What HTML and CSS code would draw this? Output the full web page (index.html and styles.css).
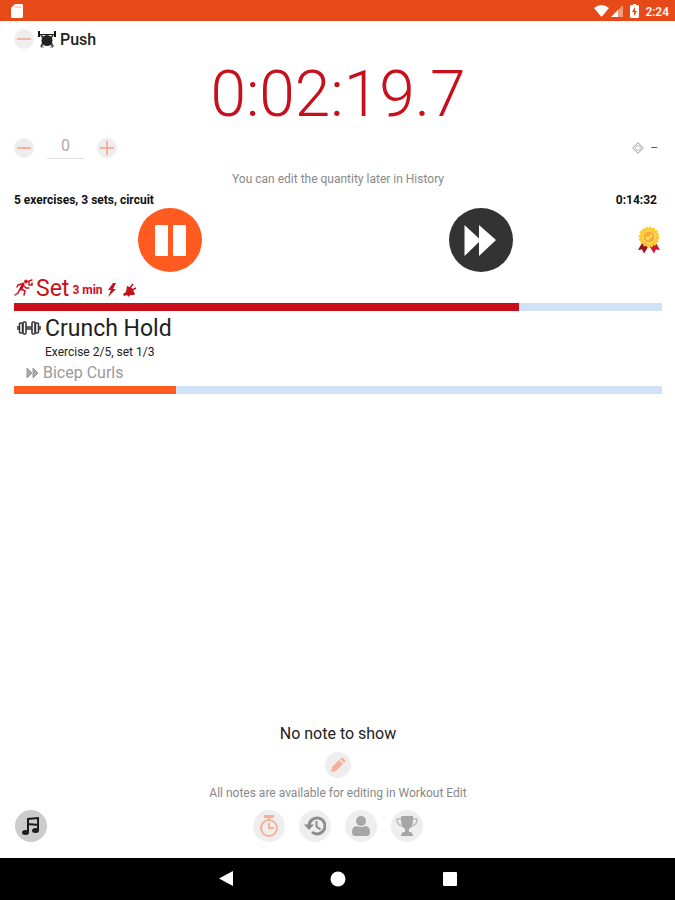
FILE: index.html
```html
<!DOCTYPE html>
<html lang="en">
<head>
    <meta charset="UTF-8">
    <meta name="viewport" content="width=device-width, initial-scale=1.0">
    <title>Push</title>
    <link rel="stylesheet" href="styles.css">
</head>
<body>
    <div class="status-bar">
        <svg class="sd-card" width="12" height="14" viewBox="0 0 12 14"><path fill="#fff" d="M4 0h7l1 1v12l-1 1H1l-1-1V4z"/><path stroke="#f3a98e" d="M5 2v2M7 2v2M9 2v2"/></svg>
        <div class="status-icons">
            <svg width="15" height="12" viewBox="0 0 15 12"><path fill="#fff" d="M0 3Q7.500-3 15 3L7.500 12z"/></svg>
            <svg width="12" height="12" viewBox="0 0 12 12"><path fill="#f29c7d" d="M0 12 12 0v12z"/><path fill="#fff" d="M0 12 7 5v7z"/></svg>
            <svg class="battery" width="9" height="14" viewBox="0 0 9 14"><path fill="#fff" d="M3 0h3v1h2l1 1v11l-1 1H1l-1-1V2l1-1h2z"/><path fill="#e64a19" d="M5 3 2 8h2v4l3-5H5z"/></svg>
            <span class="clock">2:24</span>
        </div>
    </div>

    <main class="workout">
        <header class="title-row">
            <button class="small-button" aria-label="Collapse">
                <svg width="14" height="14" viewBox="0 0 14 14"><path stroke="#f6a58c" stroke-width="1.500" d="M0 7h14"/></svg>
            </button>
            <svg width="18" height="17" viewBox="0 0 18 17"><path stroke="#222" stroke-width="1" d="M1 3.500h16"/><path stroke="#111" stroke-width="2" d="M1 0v6M17 0v6"/><path stroke="#444" stroke-width="2" fill="none" d="M3 4l3 4M15 4l-3 4M5 12l-2 4M13 12l2 4"/><circle cx="9" cy="9.500" r="5.500" fill="#222"/><path stroke="#777" d="M3 16h3M12 16h3"/></svg>
            <h1>Push</h1>
        </header>

        <div class="timer" role="timer">0:02:19.7</div>

        <div class="quantity-row">
            <div class="quantity">
                <button class="small-button" aria-label="Decrease quantity">
                    <svg width="14" height="14" viewBox="0 0 14 14"><path stroke="#fa9d80" stroke-width="1.500" d="M0 7h14"/></svg>
                </button>
                <input type="text" class="quantity-input" value="0" aria-label="Quantity">
                <button class="small-button" aria-label="Increase quantity">
                    <svg width="14" height="14" viewBox="0 0 14 14"><path stroke="#fa9d80" stroke-width="1.500" d="M0 7h14M7 0v14"/></svg>
                </button>
            </div>
            <div class="target">
                <svg width="12" height="12" viewBox="0 0 12 12" fill="none" stroke="#999"><path d="M6 .7 11.300 6 6 11.300.7 6z"/><circle cx="6" cy="6" r="2.500" stroke="#bbb"/></svg>
                <span>–</span>
            </div>
        </div>
        <p class="hint">You can edit the quantity later in History</p>

        <div class="summary">
            <span>5 exercises, 3 sets, circuit</span>
            <span>0:14:32</span>
        </div>

        <div class="controls">
            <div class="control">
                <button class="round-button pause" aria-label="Pause">
                    <svg width="64" height="64" viewBox="0 0 64 64" fill="#fff"><rect x="17" y="17" width="13" height="31" rx="1"/><rect x="35" y="17" width="13" height="31" rx="1"/></svg>
                </button>
            </div>
            <div class="control">
                <button class="round-button skip" aria-label="Skip">
                    <svg width="64" height="64" viewBox="0 0 64 64" fill="#fff"><path d="M15.500 17 30 30.500V17L47 32 30 48V34L15.500 48z"/></svg>
                </button>
            </div>
            <svg width="26" height="28" viewBox="0 0 26 28">
                <path fill="#9e1220" d="M6 17 2 24l4-.5 2 4 5-8z"/>
                <path fill="#cf1c2d" d="M20 17l4 7-4-.5-2 4-5-8z"/>
                <circle cx="13" cy="11" r="9.500" fill="#fccb34"/>
                <circle cx="13" cy="11" r="9.500" fill="none" stroke="#fccb34" stroke-width="2" stroke-dasharray="2 1.730"/>
                <circle cx="13" cy="11" r="6" fill="#fba92c" stroke="#fde27a"/>
                <path fill="none" stroke="#fde27a" stroke-width="2" d="m10 11 2 2 4-4"/>
            </svg>
        </div>

        <section class="set">
            <div class="set-row">
                <svg width="20" height="18" viewBox="0 0 20 18" fill="none" stroke="#c8101c" stroke-linecap="round" stroke-width="1.500"><circle cx="12" cy="2.500" r="1.500" fill="#c8101c" stroke-width="1"/><path stroke-width="3" d="m9 5-2 5"/><path d="M7 5 4 6 3 8M9 6l3 3h3M7 10l4 2-1 4M6 10l-2 4-3 2"/><path d="M15 5V2l3-1M18 4v2h-3"/></svg>
                <h2>Set</h2>
                <span class="duration">3 min</span>
                <svg class="bolt" width="10" height="14" viewBox="0 0 10 14"><path fill="#c8101c" d="M6 0 1 7h3l-3 7 8-8H6l3-6z"/></svg>
                <svg class="bell" width="14" height="14" viewBox="0 0 14 14"><path fill="#c8101c" d="M4 3 9 5l3 6-1 1H7l-1 2-2-2-3 1-1-2 3-2z"/><path stroke="#c8101c" stroke-width="1.500" d="m7 5 3-4M9 7l4-2"/></svg>
            </div>
            <div class="progress" role="progressbar" aria-label="Set progress" aria-valuenow="78">
                <div class="progress-fill set-fill" style="width: 78%"></div>
            </div>
        </section>

        <section class="exercise">
            <div class="exercise-row">
                <svg width="24" height="14" viewBox="0 0 24 14" fill="none" stroke="#333" stroke-width="1.500"><path d="M1 5v4M23 5v4M9 6h6M9 8h6" /><rect x="2.500" y="2" width="3" height="10" rx="1"/><rect x="6" y="1" width="3" height="12" rx="1"/><rect x="15" y="1" width="3" height="12" rx="1"/><rect x="18.500" y="2" width="3" height="10" rx="1"/></svg>
                <h2>Crunch Hold</h2>
            </div>
            <p class="exercise-count">Exercise 2/5, set 1/3</p>
            <div class="next-row">
                <svg width="13" height="12" viewBox="0 0 13 12"><path fill="#aaa" stroke="#999" d="m1 1 5 5-5 5zM7 1l5 5-5 5z"/></svg>
                <span>Bicep Curls</span>
            </div>
            <div class="progress" role="progressbar" aria-label="Exercise progress" aria-valuenow="25">
                <div class="progress-fill exercise-fill" style="width: 25%"></div>
            </div>
        </section>

        <section class="notes">
            <p class="note">No note to show</p>
            <button class="edit-button" aria-label="Edit note">
                <svg width="16" height="16" viewBox="0 0 16 16" fill="#f9b09a"><path d="m1 15 1-5L9 3l4 4-7 7z"/><path d="m10 2 1-1q1-1 2 0l2 2q1 1 0 2l-1 1z"/></svg>
            </button>
            <p class="hint">All notes are available for editing in Workout Edit</p>
        </section>

        <footer class="toolbar">
            <button class="tool-button music" aria-label="Music">
                <svg width="20" height="20" viewBox="0 0 20 20"><path fill="none" stroke="#1c1c1c" stroke-width="2" d="M7 16V3l10-1v12M7 8l11 1"/><ellipse cx="4.500" cy="16.500" rx="3.500" ry="2.500" fill="#1c1c1c"/><ellipse cx="14.500" cy="14.500" rx="3.500" ry="2.500" fill="#1c1c1c"/></svg>
            </button>
            <div class="tools">
                <button class="tool-button" aria-label="Timer">
                    <svg width="20" height="24" viewBox="0 0 20 24" fill="none" stroke="#f9b09a" stroke-width="2"><circle cx="10" cy="14" r="8"/><path d="M10 9v5h5M10 2v4"/><path stroke-width="3" d="M5 2.500h10"/></svg>
                </button>
                <button class="tool-button" aria-label="History">
                    <svg width="22" height="20" viewBox="0 0 22 20" fill="none" stroke="#8d8d8d" stroke-width="3"><path d="M5 10a8 8 0 1 1 3 6.200"/><path stroke-width="2" d="M12.500 5v5.500l4 3"/><path fill="#8d8d8d" stroke="none" d="M0 8.500h10L5 14z"/></svg>
                </button>
                <button class="tool-button" aria-label="Profile">
                    <svg width="18" height="20" viewBox="0 0 18 20" fill="#a6a6a6"><circle cx="9" cy="5" r="5"/><path d="M0 16q0-6 5-6 4 2 8 0 5 0 5 6 0 4-3 4H3q-3 0-3-4z"/></svg>
                </button>
                <button class="tool-button" aria-label="Achievements">
                    <svg width="22" height="20" viewBox="0 0 22 20" fill="#a6a6a6"><path d="M5 0h12v4q0 7-4 9v3h2q2 1 2 4H5q0-3 2-4h2v-3Q5 11 5 4z"/><path fill="none" stroke="#bbb" stroke-width="1.500" d="M5 3H1q0 6 5 7M17 3h4q0 6-5 7"/></svg>
                </button>
            </div>
        </footer>
    </main>

    <nav class="nav-bar">
        <button aria-label="Back"><svg width="14" height="16" viewBox="0 0 14 16"><path fill="#fff" d="M14 0v15L0 7.500z"/></svg></button>
        <button aria-label="Home"><svg width="16" height="16" viewBox="0 0 16 16"><circle cx="8" cy="8" r="7.500" fill="#fff"/></svg></button>
        <button aria-label="Recent apps"><svg width="16" height="16" viewBox="0 0 16 16"><rect x="1" y="1" width="14" height="14" rx="1" fill="#fff"/></svg></button>
    </nav>
</body>
</html>
```
FILE: styles.css
```css
* {
    box-sizing: border-box;
}

body {
    display: flex;
    flex-direction: column;
    min-height: 100vh;
    margin: 0;
    background-color: #fff;
    color: #222;
    font-family: Roboto, "Liberation Sans", sans-serif;
    font-size: 12px;
    line-height: 14px;
}

h1, h2, p {
    margin: 0;
}

svg {
    display: block;
    flex-shrink: 0;
}

button {
    display: flex;
    justify-content: center;
    align-items: center;
    padding: 0;
    border: none;
    cursor: pointer;
}

.status-bar {
    display: flex;
    justify-content: space-between;
    align-items: center;
    height: 21px;
    padding: 0 6px 0 11px;
    background-color: #e64a19;
    color: #fff;
}

.status-icons {
    display: flex;
    align-items: center;
    gap: 2px;
}

.battery {
    margin: 0 4px 0 5px;
}

.clock {
    padding-top: 2px;
    font-size: 12px;
    font-weight: 500;
}

.workout {
    display: flex;
    flex: 1;
    flex-direction: column;
    padding: 0 13px 16px 14px;
}

.title-row {
    display: flex;
    align-items: center;
    gap: 4px;
    height: 36px;
}

h1 {
    padding-top: 2px;
    font-size: 16px;
    font-weight: 500;
}

.small-button {
    width: 20px;
    height: 20px;
    border-radius: 50%;
    background-color: #eee;
}

.timer {
    padding-top: 1px;
    color: #c8101c;
    font-size: 64px;
    font-weight: 300;
    line-height: 73px;
    text-align: center;
}

.quantity-row {
    display: flex;
    justify-content: space-between;
    align-items: center;
    height: 34px;
}

.quantity {
    display: flex;
    align-items: center;
    gap: 13px;
}

.quantity-input {
    width: 37px;
    height: 22px;
    padding: 0 0 4px;
    border: none;
    border-bottom: 1px solid #ddd;
    background: none;
    color: #aaa;
    font: 16px Roboto, "Liberation Sans", sans-serif;
    text-align: center;
}

.target {
    display: flex;
    align-items: center;
    gap: 6px;
    padding-right: 4px;
    color: #555;
}

.hint {
    color: #888;
    line-height: 28px;
    text-align: center;
}

.summary {
    display: flex;
    justify-content: space-between;
    padding-right: 5px;
    color: #111;
    font-weight: 700;
}

.controls {
    display: flex;
    align-items: center;
    padding-top: 1px;
}

.control {
    display: flex;
    flex: 1;
    justify-content: center;
}

.round-button {
    width: 64px;
    height: 64px;
    border-radius: 50%;
}

.pause {
    background-color: #ff5a1f;
}

.skip {
    background-color: #333;
}

.set-row {
    display: flex;
    align-items: center;
    gap: 2px;
    height: 31px;
    color: #c8101c;
}

h2 {
    padding-top: 2px;
    font-size: 23px;
    font-weight: 400;
    line-height: 30px;
}

.duration {
    padding: 4px 2px 0 1px;
    font-weight: 700;
}

.bolt,
.bell {
    margin-top: 5px;
}

.bell {
    margin-left: 4px;
}

.progress {
    height: 8px;
    background-color: #d0e2f7;
}

.progress-fill {
    height: 100%;
}

.set-fill {
    background-color: #c8101c;
}

.exercise-fill {
    background-color: #ff5a1f;
}

.exercise-row {
    display: flex;
    align-items: center;
    gap: 4px;
    height: 34px;
    padding-left: 3px;
}

.exercise-count {
    padding-left: 31px;
}

.next-row {
    display: flex;
    align-items: center;
    gap: 4px;
    height: 27px;
    padding-left: 12px;
    color: #999;
    font-size: 16px;
}

.notes {
    display: flex;
    flex-direction: column;
    align-items: center;
    margin-top: auto;
}

.note {
    font-size: 16px;
    line-height: 20px;
}

.edit-button {
    width: 26px;
    height: 26px;
    margin: 8px 0 1px;
    border-radius: 50%;
    background-color: #eee;
}

.toolbar {
    display: grid;
    grid-template-columns: 1fr auto 1fr;
    padding-top: 3px;
}

.tools {
    display: flex;
    gap: 14px;
}

.tool-button {
    width: 32px;
    height: 32px;
    border-radius: 50%;
    background-color: #eee;
}

.music {
    margin-left: 1px;
    background-color: #ccc;
}

.nav-bar {
    display: flex;
    justify-content: center;
    gap: 64px;
    height: 42px;
    background-color: #000;
}

.nav-bar button {
    width: 48px;
    background: none;
}
```
